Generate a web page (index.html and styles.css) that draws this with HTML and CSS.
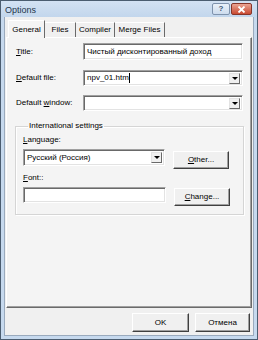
FILE: index.html
```html
<!DOCTYPE html>
<html lang="en">
<head>
    <meta charset="UTF-8">
    <title>Options</title>
    <link rel="stylesheet" href="styles.css">
</head>
<body>
    <div class="window">
        <div class="titlebar">
            <span class="title">Options</span>
            <div class="caption-buttons">
                <span class="cbtn help">?</span>
                <span class="cbtn close">
                    <svg width="9" height="7" viewBox="0 0 9 7"><path d="M1.5 0.5 L7.5 6.5 M7.5 0.5 L1.5 6.5" stroke="#fff" stroke-width="1.8"/></svg>
                </span>
            </div>
        </div>
        <div class="client">
            <div class="tabs">
                <span class="tab active t-general">General</span>
                <span class="tab t-files">Files</span>
                <span class="tab t-compiler">Compiler</span>
                <span class="tab t-merge">Merge Files</span>
            </div>
            <div class="panel">
                <div class="row">
                    <label class="lbl"><u>T</u>itle:</label>
                    <div class="field">Чистый дисконтированный доход</div>
                </div>
                <div class="row">
                    <label class="lbl"><u>D</u>efault file:</label>
                    <div class="field combo"><span class="sel">npv_01.htm</span><span class="caret"></span><span class="arrow"></span></div>
                </div>
                <div class="row">
                    <label class="lbl">Default <u>w</u>indow:</label>
                    <div class="field combo"><span class="arrow"></span></div>
                </div>
                <fieldset class="group">
                    <legend>International settings</legend>
                    <div class="glabel"><u>L</u>anguage:</div>
                    <div class="grow">
                        <div class="field combo lang">Русский (Россия)<span class="arrow"></span></div>
                        <span class="btn other"><u>O</u>ther...</span>
                    </div>
                    <div class="glabel"><u>F</u>ont::</div>
                    <div class="grow">
                        <div class="field font"></div>
                        <span class="btn change"><u>C</u>hange...</span>
                    </div>
                </fieldset>
            </div>
            <div class="footer">
                <span class="btn wide">OK</span>
                <span class="btn wide">Отмена</span>
            </div>
        </div>
    </div>
</body>
</html>
```

FILE: styles.css
```css
html, body { margin: 0; padding: 0; }
body { width: 258px; height: 340px; overflow: hidden; font-family: "Liberation Sans", Arial, sans-serif; font-size: 8px; line-height: 10px; color: #000; }

.window { box-sizing: border-box; width: 258px; height: 340px; background: #c6d9ee; border: 1px solid #4b5d70; padding: 0 3px 3px 3px; display: flex; flex-direction: column; }
.titlebar { height: 16px; flex: none; display: flex; align-items: flex-start; justify-content: space-between; background: linear-gradient(#d3e2f3, #c2d6ec); margin: 0 -3px; padding: 0 5px 0 4px; }
.title { font-size: 9px; line-height: 11px; color: #24364c; margin-top: 4px; }
.caption-buttons { display: flex; gap: 1px; margin-top: 2px; }
.cbtn { box-sizing: border-box; height: 12px; border: 1px solid #7f93ad; border-radius: 2px; display: flex; align-items: center; justify-content: center; font-size: 8px; font-weight: bold; }
.help { width: 18px; background: linear-gradient(#eaf1f9, #cddcee); color: #3e5474; }
.close { width: 21px; background: linear-gradient(#eba493, #c94a32); border-color: #86352a; }

.client { flex: 1; background: #f0f0f0; border: 1px solid #9aaabd; border-top: none; display: flex; flex-direction: column; padding: 0 1px 0 1px; }
.tabs { display: flex; height: 17px; flex: none; margin-top: 3px; padding-left: 2px; align-items: flex-end; position: relative; z-index: 1; }
.tab { box-sizing: border-box; height: 15px; border-top: 1px solid #fff; border-right: 1px solid #6a6a6a; background: #f0f0f0; display: flex; align-items: center; justify-content: center; }
.tab.active { height: 18px; border-left: 1px solid #fff; margin-bottom: -1px; background: #f4f4f4; }
.t-general { width: 37px; }
.t-files { width: 31px; }
.t-compiler { width: 39px; }
.t-merge { width: 50px; }

.panel { box-sizing: border-box; height: 271px; flex: none; border: 1px solid #fff; border-right-color: #6a6a6a; border-bottom-color: #6a6a6a; box-shadow: inset -1px -1px 0 #a0a0a0; background: #f4f4f4; padding: 5px 8px 0 8px; }
.row { display: flex; align-items: center; padding-left: 1px; margin-bottom: 10px; }
.row:nth-child(2) { margin-bottom: 9px; }
.lbl { width: 67px; flex: none; }
.field { box-sizing: border-box; flex: 1; height: 17px; background: #fff; border: 1px solid #a0a0a0; border-right-color: #fff; border-bottom-color: #fff; box-shadow: inset 1px 1px 0 #696969, inset -1px -1px 0 #e3e3e3; display: flex; align-items: center; padding: 0 3px; position: relative; }
.combo { height: 16px; }
.combo .arrow { box-sizing: border-box; position: absolute; right: 2px; top: 2px; width: 11px; height: 11px; background: #f0f0f0; border: 1px solid #e3e3e3; border-right-color: #696969; border-bottom-color: #696969; }
.combo .arrow::after { content: ""; position: absolute; left: 2px; top: 3px; border: 3px solid transparent; border-top: 3px solid #000; }
.caret { width: 1px; height: 10px; background: #000; }

.group { margin: 0; border: 1px solid #d5d5d5; box-shadow: 1px 1px 0 #fff, inset 1px 1px 0 #fff; padding: 0 13px 8px 7px; }
.group legend { padding: 0 1px; margin-left: 5px; line-height: 10px; }
.glabel { margin: 4px 0 4px; }
.group .glabel:nth-of-type(2) { margin-top: 5px; }
.grow { display: flex; align-items: flex-start; gap: 8px; }
.lang { flex: none; width: 142px; height: 17px; }
.font { flex: none; width: 143px; height: 16px; }
.btn { box-sizing: border-box; display: flex; align-items: center; justify-content: center; width: 56px; height: 18px; border: 1px solid #fff; border-right-color: #404040; border-bottom-color: #404040; box-shadow: inset -1px -1px 0 #a0a0a0; background: #f0f0f0; }
.other { margin-top: 2px; }
.change { margin-top: 1px; }

.footer { display: flex; justify-content: flex-end; gap: 6px; padding: 5px 2px 0 0; }
.btn.wide { width: 57px; height: 19px; }
.btn.wide + .btn.wide { width: 55px; }
```
